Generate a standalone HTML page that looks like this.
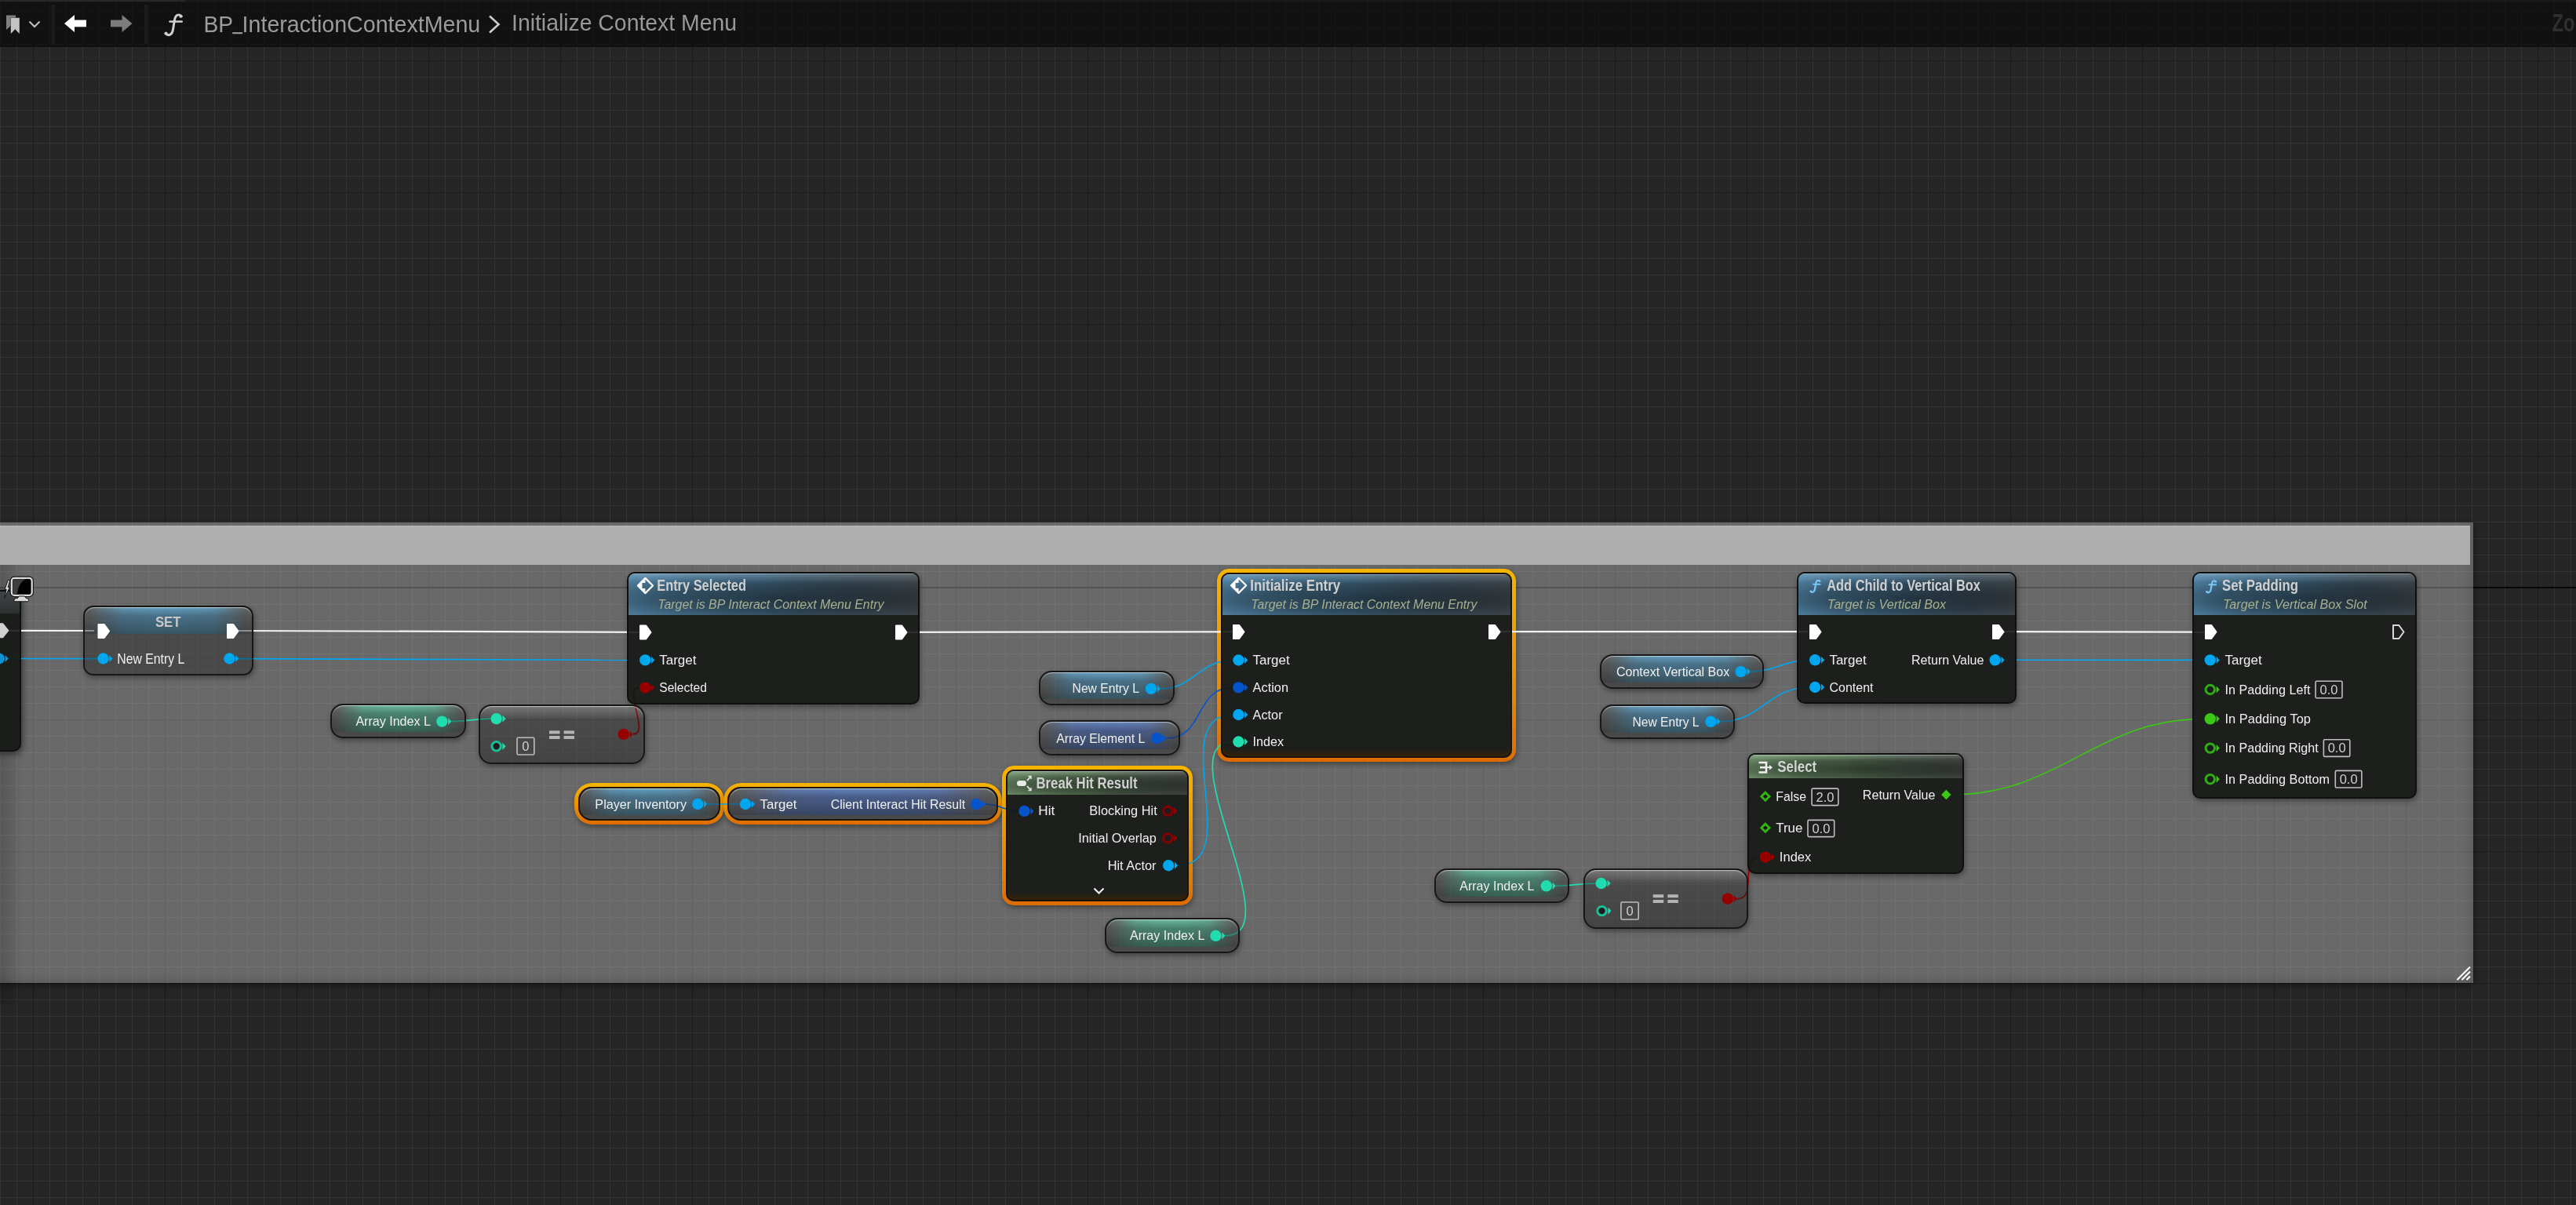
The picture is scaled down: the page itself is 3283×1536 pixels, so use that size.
<!DOCTYPE html>
<html><head><meta charset="utf-8"><style>
html,body{margin:0;padding:0;width:3283px;height:1536px;overflow:hidden;background:#262626;font-family:"Liberation Sans", sans-serif}
#grid{position:absolute;left:0;top:0;width:3283px;height:1536px;
background:
 linear-gradient(180deg, transparent 748px, #080808 748px, #080808 750px, transparent 750px),
 linear-gradient(90deg, #1b1b1b 1px, transparent 1px) 42px 0/168px 100%,
 linear-gradient(180deg, #1b1b1b 1px, transparent 1px) 0 77px/100% 168px,
 linear-gradient(90deg, #343434 1px, transparent 1px) 0px 0/21px 100%,
 linear-gradient(180deg, #343434 1px, transparent 1px) 0 14px/100% 21px,
 #262626;}
#topbar{position:absolute;left:0;top:0;width:3283px;height:60px;background:rgba(6,6,6,0.64);border-top:3px solid rgba(36,36,36,0.4);box-sizing:border-box}
#strip{position:absolute;left:0;top:0;width:236px;height:2px;background:#272727}
.cm{position:absolute;left:-20px;top:666px;width:3172px;height:586.7px;background:rgba(255,255,255,0.31);box-shadow:inset -8px -8px 12px -4px rgba(0,0,0,0.14),0 3px 10px rgba(0,0,0,0.45)}
.cmh{position:absolute;left:-20px;top:670.3px;width:3168px;height:49.7px;background:linear-gradient(180deg,#b8b8b8 0,#afafaf 3px,#adadad 100%)}
.cmb{position:absolute;left:0;top:720px;width:30px;height:560px;background:linear-gradient(90deg,rgba(0,0,0,0.18),rgba(0,0,0,0))}
svg{position:absolute;left:0;top:0}
.fn,.vn,.sel,.shd{position:absolute;box-sizing:border-box}
.shd{box-shadow:1px 3px 7px rgba(0,0,0,0.38)}
.fn{background:rgba(18,21,17,0.88);border:2px solid #0f0f0f;overflow:hidden}
.fn .hd{position:absolute;left:0;top:0;right:0;box-shadow:inset 0 1px 0 rgba(225,235,235,0.32)}
.vn{border:2px solid #171717;overflow:hidden;background:rgba(20,20,20,0.38)}
.vn .bd{position:absolute;left:0;top:0;right:0;background:linear-gradient(180deg,rgba(255,255,255,0.13) 0%,rgba(255,255,255,0.04) 45%,rgba(0,0,0,0.12) 100%)}
.vn .bc{position:absolute;left:0;top:0;right:0;-webkit-mask-image:linear-gradient(90deg,transparent 2%,rgba(0,0,0,0.85) 22%,#000 40%,#000 60%,rgba(0,0,0,0.85) 78%,transparent 98%)}
.vn .hl{position:absolute;left:0;top:0;right:0;bottom:0;border-radius:inherit;box-shadow:inset 0 2px 1px -1px rgba(255,255,255,0.55)}
.sel{padding:5px;background:linear-gradient(180deg,#f5b400 0%,#ea9400 50%,#dd6c00 100%);-webkit-mask:linear-gradient(#000 0 0) content-box,linear-gradient(#000 0 0);-webkit-mask-composite:xor;mask-composite:exclude}
.fn.selb{border-color:#1c1206;box-shadow:inset 0 -6px 5px -1px rgba(60,36,6,0.75)}
.vn.selb{border-color:#1c1406}
</style></head><body>
<div id="grid"></div>
<div class="cm"></div><div class="cmh"></div><div class="cmb"></div>
<div class="shd" style="left:-60px;top:752px;width:87px;height:206px;border-radius:10px;box-shadow:2px 3px 9px rgba(0,0,0,0.5)"></div>
<div class="shd" style="left:106px;top:772px;width:217px;height:89px;border-radius:13px"></div>
<div class="shd" style="left:799px;top:729px;width:373px;height:169px;border-radius:10px"></div>
<div class="shd" style="left:421px;top:897px;width:173px;height:44px;border-radius:16px"></div>
<div class="shd" style="left:610px;top:898px;width:212px;height:76px;border-radius:16px"></div>
<div class="shd" style="left:732px;top:998px;width:191px;height:53px;border-radius:22px"></div>
<div class="sel" style="left:732px;top:998px;width:191px;height:53px;border-radius:22px"></div>
<div class="shd" style="left:922px;top:998px;width:355px;height:53px;border-radius:22px"></div>
<div class="sel" style="left:922px;top:998px;width:355px;height:53px;border-radius:22px"></div>
<div class="shd" style="left:1277px;top:976px;width:243px;height:178px;border-radius:15px"></div>
<div class="sel" style="left:1277px;top:976px;width:243px;height:178px;border-radius:15px"></div>
<div class="shd" style="left:1324px;top:855px;width:173px;height:44px;border-radius:16px"></div>
<div class="shd" style="left:1324px;top:918px;width:180px;height:45px;border-radius:16px"></div>
<div class="shd" style="left:1408px;top:1170px;width:172px;height:45px;border-radius:16px"></div>
<div class="shd" style="left:1551px;top:725px;width:381px;height:246px;border-radius:15px"></div>
<div class="sel" style="left:1551px;top:725px;width:381px;height:246px;border-radius:15px"></div>
<div class="shd" style="left:2039px;top:834px;width:209px;height:44px;border-radius:16px"></div>
<div class="shd" style="left:2039px;top:898px;width:172px;height:44px;border-radius:16px"></div>
<div class="shd" style="left:2290px;top:729px;width:280px;height:168px;border-radius:10px"></div>
<div class="shd" style="left:2227px;top:960px;width:276px;height:154px;border-radius:10px"></div>
<div class="shd" style="left:1828px;top:1107px;width:172px;height:44px;border-radius:16px"></div>
<div class="shd" style="left:2018px;top:1107px;width:210px;height:77px;border-radius:16px"></div>
<div class="shd" style="left:2794px;top:729px;width:286px;height:289px;border-radius:10px"></div>
<svg width="3283" height="1536" viewBox="0 0 3283 1536">
<path d="M11 803.8 L120 804" stroke="#f2f2f2" stroke-width="2.2" fill="none"/>
<path d="M300 804 L818 805.8" stroke="#f2f2f2" stroke-width="2.2" fill="none"/>
<path d="M1150 805.8 L1572 805.4" stroke="#f2f2f2" stroke-width="2.2" fill="none"/>
<path d="M1910 805.2 L2305 805.2" stroke="#f2f2f2" stroke-width="2.2" fill="none"/>
<path d="M2550 805.2 L2812 805.7" stroke="#f2f2f2" stroke-width="2.2" fill="none"/>
<path d="M10 839.5 L125 839.6" stroke="#00a6ee" stroke-width="1.6" fill="none"/>
<path d="M298 839.6 L815 841.4" stroke="#00a6ee" stroke-width="1.6" fill="none"/>
<path d="M575.3 919.6 C593.13 919.6 607.57 916.2 625.4 916.2" fill="none" stroke="#20dcae" stroke-width="1.7"/>
<path d="M806.8 935.9 C829.33 935.9 792.57 876.6 815.1 876.6" fill="none" stroke="#980000" stroke-width="1.6"/>
<path d="M901.3 1025 C915.17 1025 929.03 1025 942.9 1025" fill="none" stroke="#00a6ee" stroke-width="1.6"/>
<path d="M1256 1025 C1273.07 1025 1281.23 1033.9 1298.3 1033.9" fill="none" stroke="#0455cc" stroke-width="1.6"/>
<path d="M1479 877.9 C1521.87 877.9 1528.33 841.5 1571.2 841.5" fill="none" stroke="#00a6ee" stroke-width="1.6"/>
<path d="M1486.4 941 C1536.2 941 1521.4 876.4 1571.2 876.4" fill="none" stroke="#0455cc" stroke-width="1.6"/>
<path d="M1501.2 1103.2 C1588.6 1103.2 1483.8 911 1571.2 911" fill="none" stroke="#00a6ee" stroke-width="1.6"/>
<path d="M1561.5 1192.8 C1647.17 1192.8 1485.53 945.5 1571.2 945.5" fill="none" stroke="#20dcae" stroke-width="1.7"/>
<path d="M2230.7 856.1 C2260.73 856.1 2275.97 841.3 2306 841.3" fill="none" stroke="#00a6ee" stroke-width="1.6"/>
<path d="M2192.4 919.8 C2244.87 919.8 2253.53 876 2306 876" fill="none" stroke="#00a6ee" stroke-width="1.6"/>
<path d="M2550 841.3 L2810 841.4" stroke="#00a6ee" stroke-width="1.6" fill="none"/>
<path d="M1982.8 1129.3 C2000.8 1129.3 2015.5 1126 2033.5 1126" fill="none" stroke="#20dcae" stroke-width="1.7"/>
<path d="M2213.8 1145.7 C2241.1 1145.7 2215.4 1092.7 2242.7 1092.7" fill="none" stroke="#980000" stroke-width="1.6"/>
<path d="M2486.5 1013 C2626.43 1013 2669.67 916.3 2809.6 916.3" fill="none" stroke="#3ac814" stroke-width="1.6"/>
</svg>
<div class="fn" style="left:-60px;top:752px;width:87px;height:206px;border-radius:10px"><div class="hd" style="height:28px;box-shadow:none;background:linear-gradient(180deg,#404446,#2c3030)"></div></div>
<div class="vn" style="left:106px;top:772px;width:217px;height:89px;border-radius:13px"><div class="bd" style="height:40%"></div><div class="bc" style="height:40%;background:linear-gradient(180deg,rgba(100,185,230,0.7) 0%,rgba(60,140,190,0.5) 32%,rgba(40,115,150,0.42) 100%)"></div><div class="hl"></div></div>
<div class="fn" style="left:799px;top:729px;width:373px;height:169px;border-radius:10px"><div class="hd" style="height:52.9px;background:linear-gradient(180deg, rgba(255,255,255,0.14) 0, rgba(255,255,255,0) 22%),radial-gradient(ellipse 78% 68% at 52% 60%, rgba(0,0,0,0.56) 0%, rgba(0,0,0,0.4) 50%, rgba(0,0,0,0) 100%),linear-gradient(90deg, #5488aa 0%, #4e7c9c 45%, #465a68 80%, #444c52 100%)"></div></div>
<div class="vn" style="left:421px;top:897px;width:173px;height:44px;border-radius:16px"><div class="bd" style="height:86%"></div><div class="bc" style="height:86%;background:linear-gradient(180deg,rgba(110,225,185,0.68) 0%,rgba(60,175,140,0.5) 32%,rgba(35,140,110,0.4) 100%)"></div><div class="hl"></div></div>
<div class="vn" style="left:610px;top:898px;width:212px;height:76px;border-radius:16px;background:linear-gradient(180deg,rgba(255,255,255,0.1) 0%,rgba(20,20,20,0.36) 24%,rgba(20,20,20,0.44) 100%)"><div class="hl"></div></div>
<div class="vn selb" style="left:737px;top:1003px;width:181px;height:43px;border-radius:17px"><div class="bd" style="height:86%"></div><div class="bc" style="height:86%;background:linear-gradient(180deg,rgba(100,185,230,0.7) 0%,rgba(60,140,190,0.5) 32%,rgba(40,115,150,0.38) 100%)"></div><div class="hl"></div></div>
<div class="vn selb" style="left:927px;top:1003px;width:345px;height:43px;border-radius:17px"><div class="bd" style="height:86%"></div><div class="bc" style="height:86%;background:linear-gradient(180deg,rgba(100,145,225,0.7) 0%,rgba(60,100,190,0.5) 32%,rgba(40,80,160,0.38) 100%)"></div><div class="hl"></div></div>
<div class="fn selb" style="left:1282px;top:981px;width:233px;height:168px;border-radius:10px"><div class="hd" style="height:29.6px;background:linear-gradient(180deg, rgba(255,255,255,0.14) 0, rgba(255,255,255,0) 22%),radial-gradient(ellipse 78% 68% at 52% 60%, rgba(0,0,0,0.56) 0%, rgba(0,0,0,0.4) 50%, rgba(0,0,0,0) 100%),linear-gradient(90deg, #74966f 0%, #6e906a 45%, #5a6a5c 74%, #464a46 100%)"></div></div>
<div class="vn" style="left:1324px;top:855px;width:173px;height:44px;border-radius:16px"><div class="bd" style="height:86%"></div><div class="bc" style="height:86%;background:linear-gradient(180deg,rgba(100,185,230,0.7) 0%,rgba(60,140,190,0.5) 32%,rgba(40,115,150,0.38) 100%)"></div><div class="hl"></div></div>
<div class="vn" style="left:1324px;top:918px;width:180px;height:45px;border-radius:16px"><div class="bd" style="height:86%"></div><div class="bc" style="height:86%;background:linear-gradient(180deg,rgba(100,145,225,0.7) 0%,rgba(60,100,190,0.5) 32%,rgba(40,80,160,0.38) 100%)"></div><div class="hl"></div></div>
<div class="vn" style="left:1408px;top:1170px;width:172px;height:45px;border-radius:16px"><div class="bd" style="height:86%"></div><div class="bc" style="height:86%;background:linear-gradient(180deg,rgba(110,225,185,0.68) 0%,rgba(60,175,140,0.5) 32%,rgba(35,140,110,0.4) 100%)"></div><div class="hl"></div></div>
<div class="fn selb" style="left:1556px;top:730px;width:371px;height:236px;border-radius:10px"><div class="hd" style="height:51.6px;background:linear-gradient(180deg, rgba(255,255,255,0.14) 0, rgba(255,255,255,0) 22%),radial-gradient(ellipse 78% 68% at 52% 60%, rgba(0,0,0,0.56) 0%, rgba(0,0,0,0.4) 50%, rgba(0,0,0,0) 100%),linear-gradient(90deg, #5488aa 0%, #4e7c9c 45%, #465a68 80%, #444c52 100%)"></div></div>
<div class="vn" style="left:2039px;top:834px;width:209px;height:44px;border-radius:16px"><div class="bd" style="height:86%"></div><div class="bc" style="height:86%;background:linear-gradient(180deg,rgba(100,185,230,0.7) 0%,rgba(60,140,190,0.5) 32%,rgba(40,115,150,0.38) 100%)"></div><div class="hl"></div></div>
<div class="vn" style="left:2039px;top:898px;width:172px;height:44px;border-radius:16px"><div class="bd" style="height:86%"></div><div class="bc" style="height:86%;background:linear-gradient(180deg,rgba(100,185,230,0.7) 0%,rgba(60,140,190,0.5) 32%,rgba(40,115,150,0.38) 100%)"></div><div class="hl"></div></div>
<div class="fn" style="left:2290px;top:729px;width:280px;height:168px;border-radius:10px"><div class="hd" style="height:53.2px;background:linear-gradient(180deg, rgba(255,255,255,0.14) 0, rgba(255,255,255,0) 22%),radial-gradient(ellipse 78% 68% at 52% 60%, rgba(0,0,0,0.56) 0%, rgba(0,0,0,0.4) 50%, rgba(0,0,0,0) 100%),linear-gradient(90deg, #5488aa 0%, #4e7c9c 45%, #465a68 80%, #444c52 100%)"></div></div>
<div class="fn" style="left:2227px;top:960px;width:276px;height:154px;border-radius:10px"><div class="hd" style="height:30.1px;background:linear-gradient(180deg, rgba(255,255,255,0.14) 0, rgba(255,255,255,0) 22%),radial-gradient(ellipse 78% 68% at 52% 60%, rgba(0,0,0,0.56) 0%, rgba(0,0,0,0.4) 50%, rgba(0,0,0,0) 100%),linear-gradient(90deg, #74966f 0%, #6e906a 45%, #5a6a5c 74%, #464a46 100%)"></div></div>
<div class="vn" style="left:1828px;top:1107px;width:172px;height:44px;border-radius:16px"><div class="bd" style="height:86%"></div><div class="bc" style="height:86%;background:linear-gradient(180deg,rgba(110,225,185,0.68) 0%,rgba(60,175,140,0.5) 32%,rgba(35,140,110,0.4) 100%)"></div><div class="hl"></div></div>
<div class="vn" style="left:2018px;top:1107px;width:210px;height:77px;border-radius:16px;background:linear-gradient(180deg,rgba(255,255,255,0.1) 0%,rgba(20,20,20,0.36) 24%,rgba(20,20,20,0.44) 100%)"><div class="hl"></div></div>
<div class="fn" style="left:2794px;top:729px;width:286px;height:289px;border-radius:10px"><div class="hd" style="height:52.8px;background:linear-gradient(180deg, rgba(255,255,255,0.14) 0, rgba(255,255,255,0) 22%),radial-gradient(ellipse 78% 68% at 52% 60%, rgba(0,0,0,0.56) 0%, rgba(0,0,0,0.4) 50%, rgba(0,0,0,0) 100%),linear-gradient(90deg, #5488aa 0%, #4e7c9c 45%, #465a68 80%, #444c52 100%)"></div></div>
<svg width="3283" height="1536" viewBox="0 0 3283 1536" font-family="Liberation Sans" style="will-change:transform">
<path d="M-4 795 L3.5 795 L10.5 803.8 L3.5 812.6 L-4 812.6 Z" fill="#d0d0d0" stroke="#d0d0d0" stroke-width="1.5" stroke-linejoin="round"/>
<circle cx="-1.2" cy="839.5" r="7.2" fill="#0a94d4"/><path d="M6.6 834.9 L10.8 839.5 L6.6 844.1 Z" fill="#0a94d4"/>
<path d="M10.2 739.6 L12.8 739.6 L10.2 748.4 L12.4 748.4 L5.8 762.4 L8.2 751.4 L6 751.4 Z" fill="#d6d6d6" stroke="#151515" stroke-width="1" stroke-linejoin="round"/>
<rect x="14.8" y="736.8" width="25.9" height="22" rx="3.6" fill="none" stroke="#141414" stroke-width="4.6"/><rect x="14.8" y="736.8" width="25.9" height="22" rx="3.6" fill="#000" stroke="#dedede" stroke-width="2.2"/><path d="M16.2 757.6 L16.2 738.2 L35 738.2 C27.5 740.5 23.5 748 22.5 757.6 Z" fill="#3e3e3e"/><path d="M35 738.2 C27.5 740.5 23.5 748 22.5 757.6" stroke="#080808" stroke-width="1.4" fill="none"/><path d="M24.2 760 L31.4 760 L33.2 762.6 L36.2 763 Q37.2 766.6 35.8 766.8 L18.8 766.8 Q17.4 766.6 18.4 763 L22.4 762.6 Z" fill="#dcdcdc" stroke="#141414" stroke-width="1"/>
<text x="197.92" y="799.3" font-size="18" font-weight="bold" font-style="normal" fill="#c8c8c8" textLength="32.62" lengthAdjust="spacingAndGlyphs" >SET</text>
<path d="M125.5 796 L132.8 796 L139 804.5 L132.8 813 L125.5 813 Z" fill="#ffffff" stroke="#ffffff" stroke-width="2" stroke-linejoin="round"/>
<path d="M290 796 L297.3 796 L303.5 804.5 L297.3 813 L290 813 Z" fill="#ffffff" stroke="#ffffff" stroke-width="2" stroke-linejoin="round"/>
<circle cx="131.5" cy="839.5" r="7.2" fill="#00a6ee"/><path d="M139.3 834.9 L143.5 839.5 L139.3 844.1 Z" fill="#00a6ee"/>
<circle cx="292.4" cy="839.5" r="7.2" fill="#00a6ee"/><path d="M300.2 834.9 L304.4 839.5 L300.2 844.1 Z" fill="#00a6ee"/>
<text x="149.34" y="845.5" font-size="17.6" font-weight="normal" font-style="normal" fill="#f0f0f0" textLength="85.88" lengthAdjust="spacingAndGlyphs" >New Entry L</text>
<text x="837.24" y="753.1" font-size="19.4" font-weight="bold" font-style="normal" fill="#d0d0d0" textLength="113.75" lengthAdjust="spacingAndGlyphs" >Entry Selected</text>
<text x="838.16" y="776" font-size="17.4" font-weight="normal" font-style="italic" fill="#a8b090" textLength="288.27" lengthAdjust="spacingAndGlyphs" >Target is BP Interact Context Menu Entry</text>
<path d="M816 797.5 L823.3 797.5 L829.5 806 L823.3 814.5 L816 814.5 Z" fill="#ffffff" stroke="#ffffff" stroke-width="2" stroke-linejoin="round"/>
<path d="M1142 797.5 L1149.3 797.5 L1155.5 806 L1149.3 814.5 L1142 814.5 Z" fill="#ffffff" stroke="#ffffff" stroke-width="2" stroke-linejoin="round"/>
<circle cx="822.3" cy="841.4" r="7.2" fill="#00a6ee"/><path d="M830.1 836.8 L834.3 841.4 L830.1 846 Z" fill="#00a6ee"/>
<text x="840.26" y="847" font-size="17.4" font-weight="normal" font-style="normal" fill="#f0f0f0" textLength="47.27" lengthAdjust="spacingAndGlyphs" >Target</text>
<circle cx="822.3" cy="876.6" r="7.2" fill="#980000"/><path d="M830.1 872 L834.3 876.6 L830.1 881.2 Z" fill="#980000"/>
<text x="840.26" y="882.4" font-size="17.4" font-weight="normal" font-style="normal" fill="#f0f0f0" textLength="60.57" lengthAdjust="spacingAndGlyphs" >Selected</text>
<text x="453.38" y="924.8" font-size="17" font-weight="normal" font-style="normal" fill="#f0f0f0" textLength="95.53" lengthAdjust="spacingAndGlyphs" >Array Index L</text>
<circle cx="563.3" cy="919.6" r="7.2" fill="#20dcae"/><path d="M571.1 915 L575.3 919.6 L571.1 924.2 Z" fill="#20dcae"/>
<circle cx="632.6" cy="916.2" r="7.2" fill="#20dcae"/><path d="M640.4 911.6 L644.6 916.2 L640.4 920.8 Z" fill="#20dcae"/>
<circle cx="632.6" cy="951.3" r="5.7" fill="#1c1c1c" stroke="#1cbc96" stroke-width="3"/><path d="M640.4 946.7 L644.6 951.3 L640.4 955.9 Z" fill="#20dcae"/>
<rect x="659" y="940.3" width="21.8" height="21.7" fill="none" stroke="#bdbdbd" stroke-width="1.6" rx="1.5"/>
<text x="669.9" y="956.92" font-size="16.5" fill="#cfcfcf" text-anchor="middle">0</text>
<g fill="#b4b4b4"><rect x="700" y="931.4" width="13.5" height="4"/><rect x="718.5" y="931.4" width="13.5" height="4"/><rect x="700" y="938" width="13.5" height="4"/><rect x="718.5" y="938" width="13.5" height="4"/></g>
<circle cx="794.8" cy="935.9" r="7.2" fill="#980000"/><path d="M802.6 931.3 L806.8 935.9 L802.6 940.5 Z" fill="#980000"/>
<text x="758.36" y="1030.5" font-size="17.4" font-weight="normal" font-style="normal" fill="#f0f0f0" textLength="116.67" lengthAdjust="spacingAndGlyphs" >Player Inventory</text>
<circle cx="889.3" cy="1025" r="7.2" fill="#00a6ee"/><path d="M897.1 1020.4 L901.3 1025 L897.1 1029.6 Z" fill="#00a6ee"/>
<circle cx="950.1" cy="1025" r="7.2" fill="#00a6ee"/><path d="M957.9 1020.4 L962.1 1025 L957.9 1029.6 Z" fill="#00a6ee"/>
<text x="968.56" y="1030.5" font-size="17.4" font-weight="normal" font-style="normal" fill="#f0f0f0" textLength="46.97" lengthAdjust="spacingAndGlyphs" >Target</text>
<text x="1058.66" y="1030.5" font-size="17.4" font-weight="normal" font-style="normal" fill="#f0f0f0" textLength="171.47" lengthAdjust="spacingAndGlyphs" >Client Interact Hit Result</text>
<circle cx="1244" cy="1025" r="7.2" fill="#0455cc"/><path d="M1251.8 1020.4 L1256 1025 L1251.8 1029.6 Z" fill="#0455cc"/>
<text x="1320.54" y="1004.7" font-size="19.4" font-weight="bold" font-style="normal" fill="#d0d0d0" textLength="129.05" lengthAdjust="spacingAndGlyphs" >Break Hit Result</text>
<circle cx="1305.5" cy="1033.9" r="7.2" fill="#0455cc"/><path d="M1313.3 1029.3 L1317.5 1033.9 L1313.3 1038.5 Z" fill="#0455cc"/>
<text x="1323.36" y="1039.4" font-size="17.4" font-weight="normal" font-style="normal" fill="#f0f0f0" textLength="20.97" lengthAdjust="spacingAndGlyphs" >Hit</text>
<text x="1388.36" y="1039.4" font-size="17.4" font-weight="normal" font-style="normal" fill="#f0f0f0" textLength="86.37" lengthAdjust="spacingAndGlyphs" >Blocking Hit</text>
<circle cx="1488.4" cy="1033.9" r="5.7" fill="#1c1c1c" stroke="#860000" stroke-width="3"/><path d="M1496.2 1029.3 L1500.4 1033.9 L1496.2 1038.5 Z" fill="#980000"/>
<text x="1374.26" y="1074" font-size="17.4" font-weight="normal" font-style="normal" fill="#f0f0f0" textLength="99.67" lengthAdjust="spacingAndGlyphs" >Initial Overlap</text>
<circle cx="1488.4" cy="1068.5" r="5.7" fill="#1c1c1c" stroke="#860000" stroke-width="3"/><path d="M1496.2 1063.9 L1500.4 1068.5 L1496.2 1073.1 Z" fill="#980000"/>
<text x="1411.66" y="1108.7" font-size="17.4" font-weight="normal" font-style="normal" fill="#f0f0f0" textLength="61.87" lengthAdjust="spacingAndGlyphs" >Hit Actor</text>
<circle cx="1489.2" cy="1103.2" r="7.2" fill="#00a6ee"/><path d="M1497 1098.6 L1501.2 1103.2 L1497 1107.8 Z" fill="#00a6ee"/>
<path d="M1394.5 1132.5 L1400.5 1138.5 L1406.5 1132.5" stroke="#f0f0f0" stroke-width="2.2" fill="none"/>
<rect x="1296" y="995" width="12" height="7" rx="3.5" fill="#e8e8e8"/><path d="M1309 995 L1313.5 990" stroke="#e8e8e8" stroke-width="1.8"/><path d="M1309 1002 L1313.5 1007" stroke="#e8e8e8" stroke-width="1.8"/><path d="M1310.5 989.5 L1314 989.5 L1314 993" stroke="#e8e8e8" stroke-width="1.4" fill="none"/><path d="M1310.5 1007.5 L1314 1007.5 L1314 1004" stroke="#e8e8e8" stroke-width="1.4" fill="none"/>
<text x="1366.58" y="883.4" font-size="17" font-weight="normal" font-style="normal" fill="#f0f0f0" textLength="85.33" lengthAdjust="spacingAndGlyphs" >New Entry L</text>
<circle cx="1467" cy="877.9" r="7.2" fill="#00a6ee"/><path d="M1474.8 873.3 L1479 877.9 L1474.8 882.5 Z" fill="#00a6ee"/>
<text x="1346.18" y="946.5" font-size="17" font-weight="normal" font-style="normal" fill="#f0f0f0" textLength="113.23" lengthAdjust="spacingAndGlyphs" >Array Element L</text>
<circle cx="1474.4" cy="941" r="7.2" fill="#0455cc"/><path d="M1482.2 936.4 L1486.4 941 L1482.2 945.6 Z" fill="#0455cc"/>
<text x="1439.98" y="1198.3" font-size="17" font-weight="normal" font-style="normal" fill="#f0f0f0" textLength="95.43" lengthAdjust="spacingAndGlyphs" >Array Index L</text>
<circle cx="1549.5" cy="1192.8" r="7.2" fill="#20dcae"/><path d="M1557.3 1188.2 L1561.5 1192.8 L1557.3 1197.4 Z" fill="#20dcae"/>
<text x="1593.24" y="753.4" font-size="19.4" font-weight="bold" font-style="normal" fill="#d0d0d0" textLength="114.95" lengthAdjust="spacingAndGlyphs" >Initialize Entry</text>
<text x="1594.36" y="776" font-size="17.4" font-weight="normal" font-style="italic" fill="#a8b090" textLength="288.17" lengthAdjust="spacingAndGlyphs" >Target is BP Interact Context Menu Entry</text>
<path d="M1572 797 L1579.3 797 L1585.5 805.5 L1579.3 814 L1572 814 Z" fill="#ffffff" stroke="#ffffff" stroke-width="2" stroke-linejoin="round"/>
<path d="M1898 797 L1905.3 797 L1911.5 805.5 L1905.3 814 L1898 814 Z" fill="#ffffff" stroke="#ffffff" stroke-width="2" stroke-linejoin="round"/>
<circle cx="1578.4" cy="841.5" r="7.2" fill="#00a6ee"/><path d="M1586.2 836.9 L1590.4 841.5 L1586.2 846.1 Z" fill="#00a6ee"/>
<text x="1596.56" y="847" font-size="17.4" font-weight="normal" font-style="normal" fill="#f0f0f0" textLength="47.17" lengthAdjust="spacingAndGlyphs" >Target</text>
<circle cx="1578.4" cy="876.4" r="7.2" fill="#0455cc"/><path d="M1586.2 871.8 L1590.4 876.4 L1586.2 881 Z" fill="#0455cc"/>
<text x="1596.56" y="882" font-size="17.4" font-weight="normal" font-style="normal" fill="#f0f0f0" textLength="45.57" lengthAdjust="spacingAndGlyphs" >Action</text>
<circle cx="1578.4" cy="911" r="7.2" fill="#00a6ee"/><path d="M1586.2 906.4 L1590.4 911 L1586.2 915.6 Z" fill="#00a6ee"/>
<text x="1596.56" y="916.6" font-size="17.4" font-weight="normal" font-style="normal" fill="#f0f0f0" textLength="38.07" lengthAdjust="spacingAndGlyphs" >Actor</text>
<circle cx="1578.4" cy="945.5" r="7.2" fill="#20dcae"/><path d="M1586.2 940.9 L1590.4 945.5 L1586.2 950.1 Z" fill="#20dcae"/>
<text x="1596.56" y="951.2" font-size="17.4" font-weight="normal" font-style="normal" fill="#f0f0f0" textLength="39.57" lengthAdjust="spacingAndGlyphs" >Index</text>
<text x="2059.98" y="862.3" font-size="17" font-weight="normal" font-style="normal" fill="#f0f0f0" textLength="144.23" lengthAdjust="spacingAndGlyphs" >Context Vertical Box</text>
<circle cx="2218.7" cy="856.1" r="7.2" fill="#00a6ee"/><path d="M2226.5 851.5 L2230.7 856.1 L2226.5 860.7 Z" fill="#00a6ee"/>
<text x="2080.48" y="925.8" font-size="17" font-weight="normal" font-style="normal" fill="#f0f0f0" textLength="85.03" lengthAdjust="spacingAndGlyphs" >New Entry L</text>
<circle cx="2180.4" cy="919.8" r="7.2" fill="#00a6ee"/><path d="M2188.2 915.2 L2192.4 919.8 L2188.2 924.4 Z" fill="#00a6ee"/>
<text x="2328.24" y="753.2" font-size="19.4" font-weight="bold" font-style="normal" fill="#d0d0d0" textLength="195.75" lengthAdjust="spacingAndGlyphs" >Add Child to Vertical Box</text>
<text x="2328.76" y="776" font-size="17.4" font-weight="normal" font-style="italic" fill="#a8b090" textLength="151.37" lengthAdjust="spacingAndGlyphs" >Target is Vertical Box</text>
<path d="M2307 797 L2314.3 797 L2320.5 805.5 L2314.3 814 L2307 814 Z" fill="#ffffff" stroke="#ffffff" stroke-width="2" stroke-linejoin="round"/>
<path d="M2540 797 L2547.3 797 L2553.5 805.5 L2547.3 814 L2540 814 Z" fill="#ffffff" stroke="#ffffff" stroke-width="2" stroke-linejoin="round"/>
<circle cx="2313.2" cy="841.3" r="7.2" fill="#00a6ee"/><path d="M2321 836.7 L2325.2 841.3 L2321 845.9 Z" fill="#00a6ee"/>
<text x="2331.46" y="847" font-size="17.4" font-weight="normal" font-style="normal" fill="#f0f0f0" textLength="47.17" lengthAdjust="spacingAndGlyphs" >Target</text>
<text x="2436.06" y="847" font-size="17.4" font-weight="normal" font-style="normal" fill="#f0f0f0" textLength="92.37" lengthAdjust="spacingAndGlyphs" >Return Value</text>
<circle cx="2542.7" cy="841.3" r="7.2" fill="#00a6ee"/><path d="M2550.5 836.7 L2554.7 841.3 L2550.5 845.9 Z" fill="#00a6ee"/>
<circle cx="2313.2" cy="876" r="7.2" fill="#00a6ee"/><path d="M2321 871.4 L2325.2 876 L2321 880.6 Z" fill="#00a6ee"/>
<text x="2331.46" y="881.6" font-size="17.4" font-weight="normal" font-style="normal" fill="#f0f0f0" textLength="56.07" lengthAdjust="spacingAndGlyphs" >Content</text>
<text x="2265.34" y="984" font-size="19.4" font-weight="bold" font-style="normal" fill="#d4d4d4" textLength="49.85" lengthAdjust="spacingAndGlyphs" >Select</text>
<path d="M2241.5 972 L2251 972 L2251 984.5 L2241.5 984.5 M2243 978.2 L2251 978.2" stroke="#f0f0f0" stroke-width="2.6" fill="none"/><path d="M2252 978.2 L2256 978.2" stroke="#f0f0f0" stroke-width="1.8"/><path d="M2255 975 L2259 978.2 L2255 981.4 Z" fill="#f0f0f0"/>
<path d="M2249.9 1010.2 L2254.9 1015.2 L2249.9 1020.2 L2244.9 1015.2 Z" fill="#111" stroke="#34b414" stroke-width="3"/>
<text x="2263.26" y="1020.7" font-size="17.4" font-weight="normal" font-style="normal" fill="#f0f0f0" textLength="38.77" lengthAdjust="spacingAndGlyphs" >False</text>
<rect x="2309.1" y="1005.1" width="33.7" height="21.5" fill="none" stroke="#bdbdbd" stroke-width="1.6" rx="1.5"/>
<text x="2325.95" y="1021.62" font-size="16.5" fill="#cfcfcf" text-anchor="middle">2.0</text>
<path d="M2249.9 1050.2 L2254.9 1055.2 L2249.9 1060.2 L2244.9 1055.2 Z" fill="#111" stroke="#34b414" stroke-width="3"/>
<text x="2263.26" y="1060.7" font-size="17.4" font-weight="normal" font-style="normal" fill="#f0f0f0" textLength="34.17" lengthAdjust="spacingAndGlyphs" >True</text>
<rect x="2304" y="1045.4" width="33.7" height="21.2" fill="none" stroke="#bdbdbd" stroke-width="1.6" rx="1.5"/>
<text x="2320.85" y="1061.78" font-size="16.5" fill="#cfcfcf" text-anchor="middle">0.0</text>
<circle cx="2249.9" cy="1092.7" r="7.2" fill="#980000"/><path d="M2257.7 1088.1 L2261.9 1092.7 L2257.7 1097.3 Z" fill="#980000"/>
<text x="2267.86" y="1098.2" font-size="17.4" font-weight="normal" font-style="normal" fill="#f0f0f0" textLength="40.47" lengthAdjust="spacingAndGlyphs" >Index</text>
<text x="2373.86" y="1018.5" font-size="17.4" font-weight="normal" font-style="normal" fill="#f0f0f0" textLength="92.57" lengthAdjust="spacingAndGlyphs" >Return Value</text>
<path d="M2480.3 1006.8 L2486.5 1013 L2480.3 1019.2 L2474.1 1013 Z" fill="#3ac814"/>
<text x="1860.28" y="1135" font-size="17" font-weight="normal" font-style="normal" fill="#f0f0f0" textLength="95.23" lengthAdjust="spacingAndGlyphs" >Array Index L</text>
<circle cx="1970.8" cy="1129.3" r="7.2" fill="#20dcae"/><path d="M1978.6 1124.7 L1982.8 1129.3 L1978.6 1133.9 Z" fill="#20dcae"/>
<circle cx="2040.7" cy="1126" r="7.2" fill="#20dcae"/><path d="M2048.5 1121.4 L2052.7 1126 L2048.5 1130.6 Z" fill="#20dcae"/>
<circle cx="2041.5" cy="1161.1" r="5.7" fill="#1c1c1c" stroke="#1cbc96" stroke-width="3"/><path d="M2049.3 1156.5 L2053.5 1161.1 L2049.3 1165.7 Z" fill="#20dcae"/>
<rect x="2065.9" y="1150" width="22.3" height="22" fill="none" stroke="#bdbdbd" stroke-width="1.6" rx="1.5"/>
<text x="2077.05" y="1166.78" font-size="16.5" fill="#cfcfcf" text-anchor="middle">0</text>
<g fill="#b4b4b4"><rect x="2106.7" y="1140.2" width="13.5" height="4"/><rect x="2125.3" y="1140.2" width="13.5" height="4"/><rect x="2106.7" y="1147" width="13.5" height="4"/><rect x="2125.3" y="1147" width="13.5" height="4"/></g>
<circle cx="2201.8" cy="1145.7" r="7.2" fill="#980000"/><path d="M2209.6 1141.1 L2213.8 1145.7 L2209.6 1150.3 Z" fill="#980000"/>
<text x="2832.04" y="753.4" font-size="19.4" font-weight="bold" font-style="normal" fill="#d0d0d0" textLength="96.95" lengthAdjust="spacingAndGlyphs" >Set Padding</text>
<text x="2832.96" y="776" font-size="17.4" font-weight="normal" font-style="italic" fill="#a8b090" textLength="183.67" lengthAdjust="spacingAndGlyphs" >Target is Vertical Box Slot</text>
<path d="M2811 797 L2818.3 797 L2824.5 805.5 L2818.3 814 L2811 814 Z" fill="#ffffff" stroke="#ffffff" stroke-width="2" stroke-linejoin="round"/>
<path d="M3050 797 L3057.3 797 L3063.5 805.5 L3057.3 814 L3050 814 Z" fill="none" stroke="#d8d8d8" stroke-width="2" stroke-linejoin="round"/>
<circle cx="2816.8" cy="841.4" r="7.2" fill="#00a6ee"/><path d="M2824.6 836.8 L2828.8 841.4 L2824.6 846 Z" fill="#00a6ee"/>
<text x="2835.56" y="847" font-size="17.4" font-weight="normal" font-style="normal" fill="#f0f0f0" textLength="47.17" lengthAdjust="spacingAndGlyphs" >Target</text>
<circle cx="2816.8" cy="879" r="5.7" fill="#1c1c1c" stroke="#2eae12" stroke-width="3"/><path d="M2824.6 874.4 L2828.8 879 L2824.6 883.6 Z" fill="#3ac814"/>
<text x="2835.56" y="884.6" font-size="17.4" font-weight="normal" font-style="normal" fill="#f0f0f0" textLength="108.87" lengthAdjust="spacingAndGlyphs" >In Padding Left</text>
<rect x="2951.1" y="868.2" width="33.9" height="21.5" fill="none" stroke="#bdbdbd" stroke-width="1.6" rx="1.5"/>
<text x="2968.05" y="884.73" font-size="16.5" fill="#cfcfcf" text-anchor="middle">0.0</text>
<circle cx="2816.8" cy="916.3" r="7.2" fill="#3ac814"/><path d="M2824.6 911.7 L2828.8 916.3 L2824.6 920.9 Z" fill="#3ac814"/>
<text x="2835.56" y="922" font-size="17.4" font-weight="normal" font-style="normal" fill="#f0f0f0" textLength="109.37" lengthAdjust="spacingAndGlyphs" >In Padding Top</text>
<circle cx="2816.8" cy="953.6" r="5.7" fill="#1c1c1c" stroke="#2eae12" stroke-width="3"/><path d="M2824.6 949 L2828.8 953.6 L2824.6 958.2 Z" fill="#3ac814"/>
<text x="2835.56" y="959.2" font-size="17.4" font-weight="normal" font-style="normal" fill="#f0f0f0" textLength="119.07" lengthAdjust="spacingAndGlyphs" >In Padding Right</text>
<rect x="2961.4" y="942.8" width="33.4" height="21.6" fill="none" stroke="#bdbdbd" stroke-width="1.6" rx="1.5"/>
<text x="2978.1" y="959.38" font-size="16.5" fill="#cfcfcf" text-anchor="middle">0.0</text>
<circle cx="2816.8" cy="993.2" r="5.7" fill="#1c1c1c" stroke="#2eae12" stroke-width="3"/><path d="M2824.6 988.6 L2828.8 993.2 L2824.6 997.8 Z" fill="#3ac814"/>
<text x="2835.56" y="998.8" font-size="17.4" font-weight="normal" font-style="normal" fill="#f0f0f0" textLength="133.47" lengthAdjust="spacingAndGlyphs" >In Padding Bottom</text>
<rect x="2976.3" y="982.4" width="33.6" height="21.6" fill="none" stroke="#bdbdbd" stroke-width="1.6" rx="1.5"/>
<text x="2993.1" y="998.98" font-size="16.5" fill="#cfcfcf" text-anchor="middle">0.0</text>
<g transform="translate(2306.4 739) scale(1)" stroke="#7cc4f4" fill="none" stroke-linecap="round"><path d="M13 1.9 C10.8 -0.2 8.5 0.8 7.9 4.4 L6.6 12 C6 15.6 3.4 16.8 1.2 14.8" stroke-width="2.3"/><path d="M4.4 5.8 L13.2 5.8" stroke-width="2"/><circle cx="12.4" cy="1.9" r="1.2" fill="#7cc4f4" stroke="none"/><circle cx="1.5" cy="14.6" r="1.2" fill="#7cc4f4" stroke="none"/></g>
<g transform="translate(2811 739.5) scale(1)" stroke="#7cc4f4" fill="none" stroke-linecap="round"><path d="M13 1.9 C10.8 -0.2 8.5 0.8 7.9 4.4 L6.6 12 C6 15.6 3.4 16.8 1.2 14.8" stroke-width="2.3"/><path d="M4.4 5.8 L13.2 5.8" stroke-width="2"/><circle cx="12.4" cy="1.9" r="1.2" fill="#7cc4f4" stroke="none"/><circle cx="1.5" cy="14.6" r="1.2" fill="#7cc4f4" stroke="none"/></g>
<path d="M822.4 736.9 L832 746.5 L822.4 756.1 L812.8 746.5 Z" fill="none" stroke="#fafafa" stroke-width="2.2" stroke-linejoin="round"/>
<path d="M822.4 736.9 L812.8 746.5 L822.4 756.1 L822.4 749.9 L818.4 749.9 L818.4 743.1 L822.4 743.1 Z" fill="#fafafa"/>
<path d="M1578.6 736.7 L1588.2 746.3 L1578.6 755.9 L1569 746.3 Z" fill="none" stroke="#fafafa" stroke-width="2.2" stroke-linejoin="round"/>
<path d="M1578.6 736.7 L1569 746.3 L1578.6 755.9 L1578.6 749.7 L1574.6 749.7 L1574.6 742.9 L1578.6 742.9 Z" fill="#fafafa"/>
<g stroke="#ffffff" stroke-width="2.2"><path d="M3131.5 1249 L3148 1232.5"/><path d="M3137.5 1249 L3148 1238.5"/><path d="M3143.5 1249 L3148 1244.5"/></g>
</svg>
<div id="topbar"></div><div id="strip"></div>
<svg width="3283" height="60" viewBox="0 0 3283 60" font-family="Liberation Sans" style="will-change:transform">
<rect x="65" y="6" width="5" height="50" fill="#1b1b1b"/>
<rect x="184" y="6" width="4.5" height="50" fill="#1b1b1b"/>
<path d="M8 19.5 L20 19.5 L20 22.5 L13.5 22.5 L13.5 33 L8 38 Z" fill="#808080"/>
<path d="M13.8 22.7 L24.8 22.7 L24.8 43 L19.3 37.3 L13.8 43 Z" fill="#c4c4c4"/>
<path d="M37.5 27.5 L44 34 L50.5 27.5" stroke="#c4c4c4" stroke-width="2" fill="none"/>
<path d="M82 30 L95 19 L95 25.5 L110 25.5 L110 34.3 L95 34.3 L95 41 Z" fill="#ffffff"/>
<path d="M168.5 30 L155.5 19 L155.5 25.5 L141 25.5 L141 34.3 L155.5 34.3 L155.5 41 Z" fill="#7c7c7c"/>
<g transform="translate(209 17.5) scale(1.72)" stroke="#d0d0d0" fill="none" stroke-linecap="round"><path d="M13 1.9 C10.8 -0.2 8.5 0.8 7.9 4.4 L6.6 12 C6 15.6 3.4 16.8 1.2 14.8" stroke-width="1.7"/><path d="M4.4 5.8 L13.2 5.8" stroke-width="1.5"/><circle cx="12.4" cy="1.9" r="1.2" fill="#d0d0d0" stroke="none"/><circle cx="1.5" cy="14.6" r="1.2" fill="#d0d0d0" stroke="none"/></g>
<text x="259.4" y="41.2" font-size="29.4" fill="#9c9c9c" textLength="37.6" lengthAdjust="spacingAndGlyphs">BP</text><rect x="296.2" y="41.1" width="12.8" height="2.1" fill="#9c9c9c"/><text x="308.6" y="41.2" font-size="29.4" fill="#9c9c9c" textLength="303.6" lengthAdjust="spacingAndGlyphs">InteractionContextMenu</text>
<path d="M624 20.5 L635.5 31 L624 41.5" stroke="#cdcdcd" stroke-width="2.6" fill="none"/>
<text x="652" y="39.2" font-size="29.2" fill="#989898" textLength="287" lengthAdjust="spacingAndGlyphs">Initialize Context Menu</text>
<text x="3252.5" y="39.8" font-size="30.5" font-weight="bold" fill="#303030" textLength="29" lengthAdjust="spacingAndGlyphs">Zo</text>
</svg>
</body></html>
